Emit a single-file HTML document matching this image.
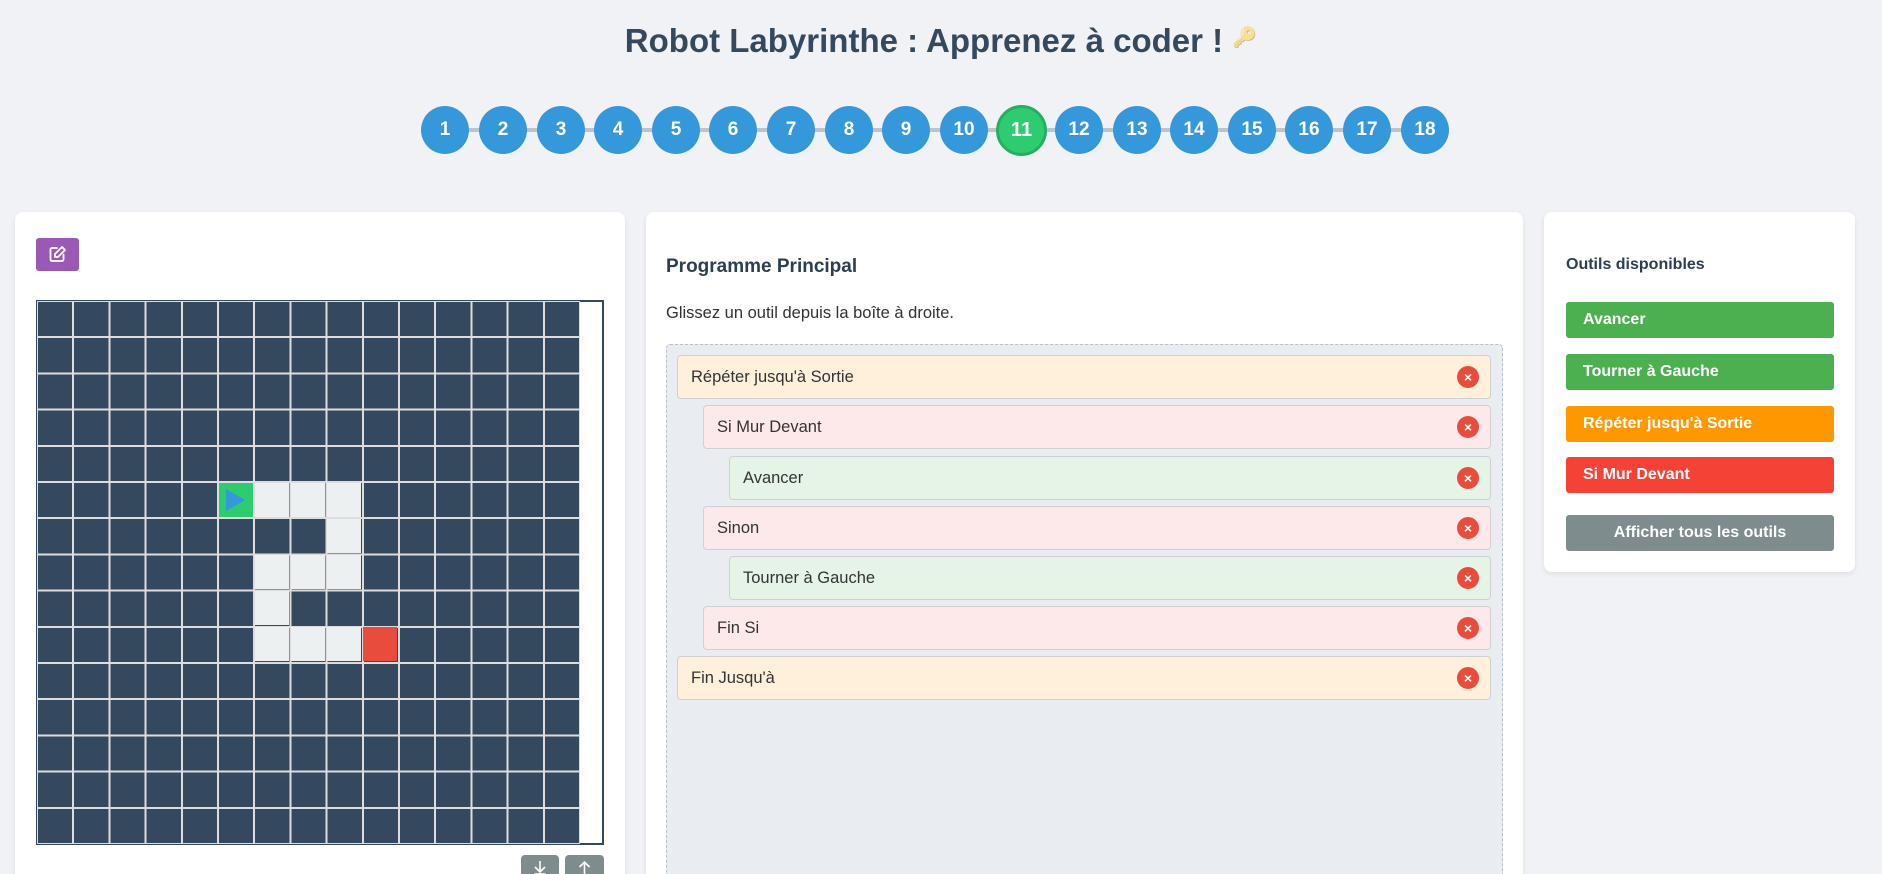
<!DOCTYPE html>
<html><head><meta charset="utf-8"><style>
*{box-sizing:border-box;margin:0;padding:0}
html,body{width:1882px;height:874px;overflow:hidden}
body{background:#f0f2f5;font-family:"Liberation Sans",Arial,sans-serif;position:relative;color:#333}
.abs{position:absolute}
h1{position:absolute;left:0;width:1882px;top:22px;text-align:center;font-size:33px;font-weight:bold;color:#34495e}
.lvl{position:absolute;top:106px;width:48px;height:48px;border-radius:50%;background:#3498db;color:#fff;font-weight:bold;font-size:19px;display:flex;align-items:center;justify-content:center}
.line{position:absolute;top:128px;height:4px;background:#bdc3c7;left:445px;width:980px}
.panel{position:absolute;background:#fff;border-radius:8px;box-shadow:0 2px 6px rgba(0,0,0,.08)}
.cell{position:absolute;width:34px;height:34px}
.blk{position:absolute;height:44px;border:1px solid #d0d0d0;border-radius:4px;font-size:16.5px;color:#333;padding-left:13px;line-height:42px}
.x{position:absolute;right:11px;top:10px;width:22px;height:22px;border-radius:50%;background:#e74c3c;color:#fff;font-size:14px;font-weight:bold;text-align:center;line-height:22px}
.o{background:#fff0dc}.p{background:#fde8ea}.g{background:#e5f4e6}
.tool{position:absolute;left:1566px;width:268px;height:36px;border-radius:3px;color:#fff;font-weight:bold;font-size:16px;line-height:36px;padding-left:17px}
</style></head><body>
<h1>Robot Labyrinthe : Apprenez à coder ! <span style="font-size:20px;opacity:.45;vertical-align:8px">🔑</span></h1>
<div class="line"></div>
<div class="lvl" style="left:421px">1</div><div class="lvl" style="left:479px">2</div><div class="lvl" style="left:537px">3</div><div class="lvl" style="left:594px">4</div><div class="lvl" style="left:652px">5</div><div class="lvl" style="left:709px">6</div><div class="lvl" style="left:767px">7</div><div class="lvl" style="left:825px">8</div><div class="lvl" style="left:882px">9</div><div class="lvl" style="left:940px">10</div>
<div class="lvl" style="left:996px;top:105px;width:51px;height:51px;background:#2ecc71;border:3px solid #27ae60;font-size:20px">11</div>
<div class="lvl" style="left:1055px">12</div><div class="lvl" style="left:1113px">13</div><div class="lvl" style="left:1170px">14</div><div class="lvl" style="left:1228px">15</div><div class="lvl" style="left:1285px">16</div><div class="lvl" style="left:1343px">17</div><div class="lvl" style="left:1401px">18</div>

<div class="panel" style="left:15px;top:212px;width:610px;height:670px"></div>
<div class="abs" style="left:36px;top:238px;width:43px;height:33px;background:#9b59b6;border-radius:3px">
<svg width="43" height="33" viewBox="0 0 43 33"><g fill="none" stroke="#fff" stroke-width="1.8" stroke-linecap="round" stroke-linejoin="round"><path d="M21 10h-5a1.5 1.5 0 0 0-1.5 1.5v10a1.5 1.5 0 0 0 1.5 1.5h10a1.5 1.5 0 0 0 1.5-1.5v-5"/><path d="M26 9l3 3-7 7h-3v-3z"/></g></svg></div>
<div class="abs" style="left:36px;top:300px;width:568px;height:545px;border:2px solid #34495e;background:#fff">
<div class="abs" style="left:-1px;top:-1px;width:543px;height:543px;background-color:#34495e;background-image:repeating-linear-gradient(90deg,#ddd 0 1px,transparent 1px 35.2px,#ddd 35.2px 36.2px),repeating-linear-gradient(0deg,#ddd 0 1px,transparent 1px 35.2px,#ddd 35.2px 36.2px)">
<div class="cell" style="left:182px;top:182px;background:#2ecc71"><svg width="34" height="34"><path d="M7 6 L26 17 L7 28Z" fill="#3498db"/></svg></div>
<div class="cell" style="left:218px;top:182px;background:#ecf0f1"></div>
<div class="cell" style="left:254px;top:182px;background:#ecf0f1"></div>
<div class="cell" style="left:290px;top:182px;background:#ecf0f1"></div>
<div class="cell" style="left:290px;top:218px;background:#ecf0f1"></div>
<div class="cell" style="left:218px;top:254px;background:#ecf0f1"></div>
<div class="cell" style="left:254px;top:254px;background:#ecf0f1"></div>
<div class="cell" style="left:290px;top:254px;background:#ecf0f1"></div>
<div class="cell" style="left:218px;top:290px;background:#ecf0f1"></div>
<div class="cell" style="left:218px;top:326px;background:#ecf0f1"></div>
<div class="cell" style="left:254px;top:326px;background:#ecf0f1"></div>
<div class="cell" style="left:290px;top:326px;background:#ecf0f1"></div>
<div class="cell" style="left:326px;top:326px;background:#e74c3c"></div>
</div></div>
<div class="abs" style="left:521px;top:855px;width:38px;height:30px;background:#7f8c8d;border-radius:4px"><svg width="38" height="19"><path d="M19 6v11M14 12l5 5 5-5M13 19h12" stroke="#fff" stroke-width="1.6" fill="none"/></svg></div>
<div class="abs" style="left:565px;top:855px;width:39px;height:30px;background:#7f8c8d;border-radius:4px"><svg width="39" height="19"><path d="M19.5 19V8M14.5 12l5-5 5 5M13 19v0" stroke="#fff" stroke-width="1.6" fill="none"/></svg></div>

<div class="panel" style="left:646px;top:212px;width:877px;height:670px"></div>
<div class="abs" style="left:666px;top:256px;font-size:19px;font-weight:bold;color:#2c3e50">Programme Principal</div>
<div class="abs" style="left:666px;top:304px;font-size:16.5px;color:#333">Glissez un outil depuis la boîte à droite.</div>
<div class="abs" style="left:666px;top:344px;width:837px;height:540px;background:#e9edf1;border:1px dashed #b8c0c8;border-radius:4px"></div>
<div class="blk o" style="left:677px;top:355px;width:814px">Répéter jusqu'à Sortie<span class="x">×</span></div>
<div class="blk p" style="left:703px;top:405px;width:788px">Si Mur Devant<span class="x">×</span></div>
<div class="blk g" style="left:729px;top:456px;width:762px">Avancer<span class="x">×</span></div>
<div class="blk p" style="left:703px;top:506px;width:788px">Sinon<span class="x">×</span></div>
<div class="blk g" style="left:729px;top:556px;width:762px">Tourner à Gauche<span class="x">×</span></div>
<div class="blk p" style="left:703px;top:606px;width:788px">Fin Si<span class="x">×</span></div>
<div class="blk o" style="left:677px;top:656px;width:814px">Fin Jusqu'à<span class="x">×</span></div>

<div class="panel" style="left:1544px;top:212px;width:311px;height:360px"></div>
<div class="abs" style="left:1566px;top:256px;font-size:16px;font-weight:bold;color:#2c3e50">Outils disponibles</div>
<div class="tool" style="top:302px;background:#4caf50">Avancer</div>
<div class="tool" style="top:354px;background:#4caf50">Tourner à Gauche</div>
<div class="tool" style="top:406px;background:#ff9800">Répéter jusqu'à Sortie</div>
<div class="tool" style="top:457px;background:#f44336">Si Mur Devant</div>
<div class="tool" style="top:515px;background:#7f8c8d;padding:0;text-align:center">Afficher tous les outils</div>
</body></html>
